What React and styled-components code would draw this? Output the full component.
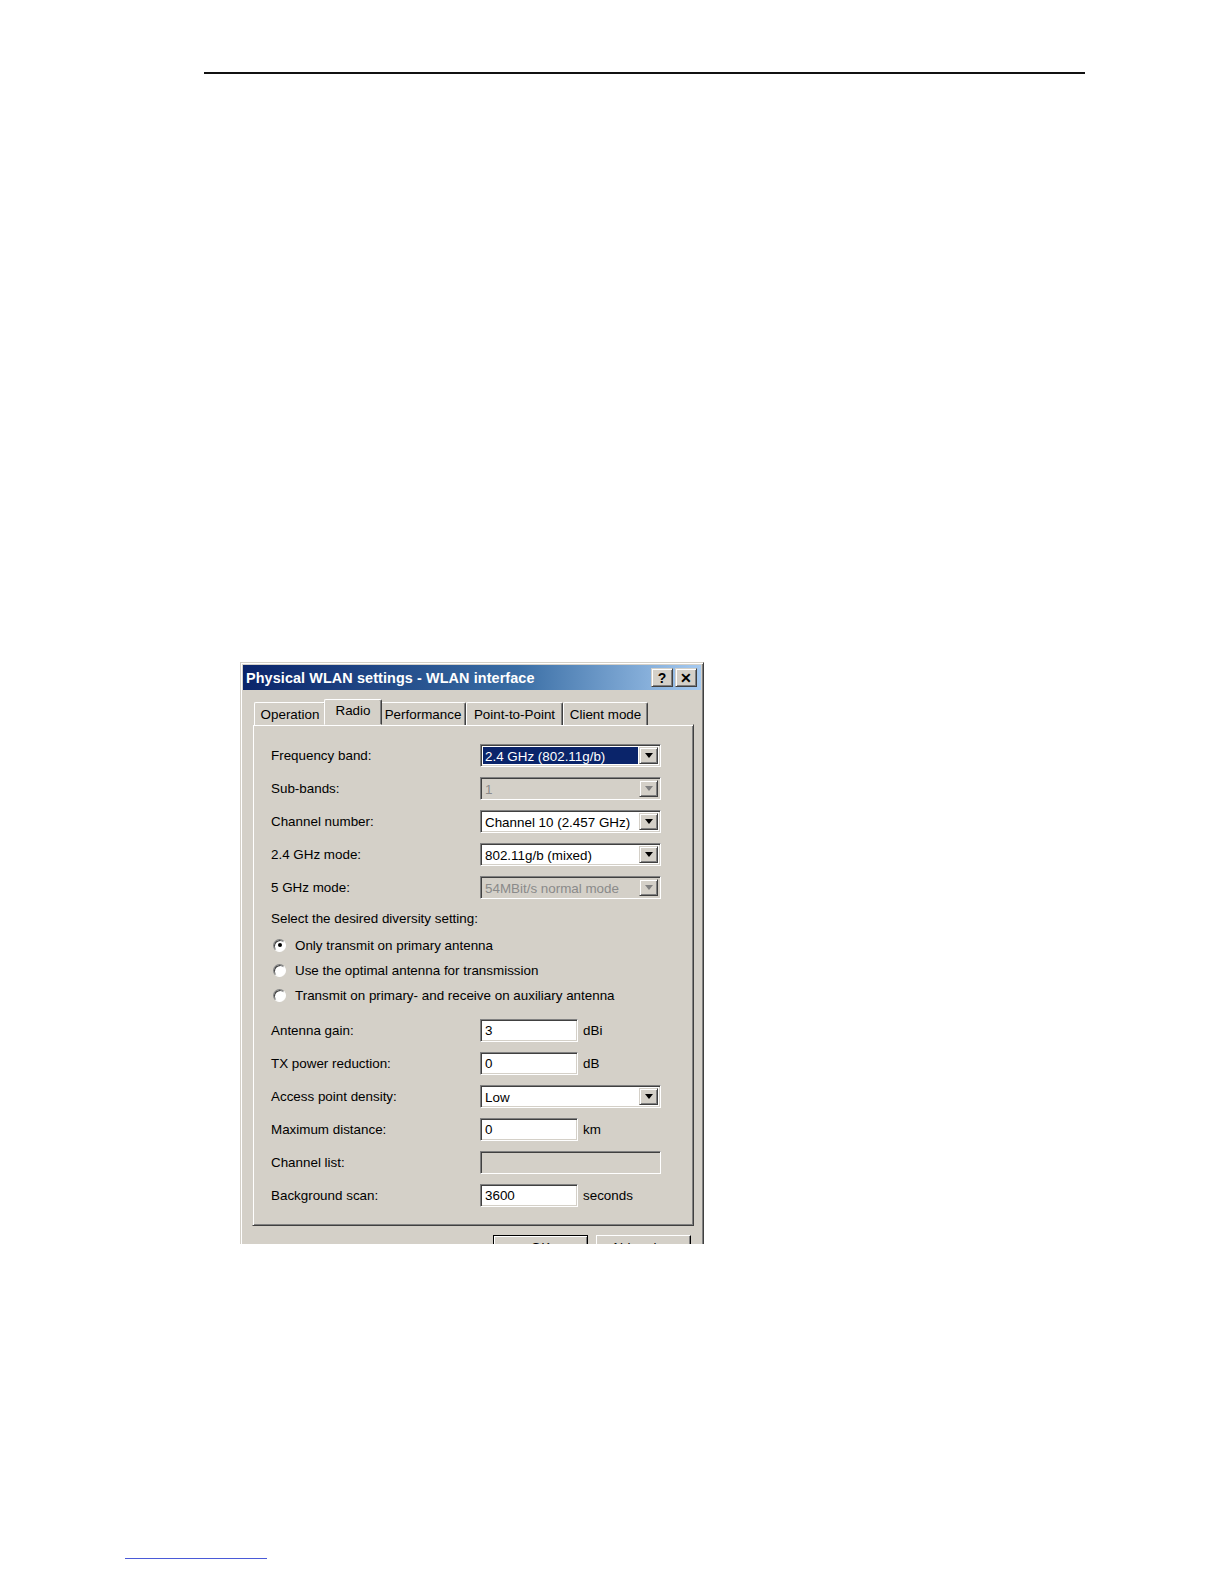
import React from "react";
import styled, { createGlobalStyle, css } from "styled-components";

const GlobalStyle = createGlobalStyle`
  html, body {
    margin: 0;
    padding: 0;
    background: #ffffff;
  }
  body {
    font-family: "Liberation Sans", Arial, sans-serif;
  }
`;

const ui = {
  face: "#d4d0c8",
  light: "#ffffff",
  shadow: "#808080",
  dark: "#404040",
  select: "#0a246a",
  disabledText: "#8a8a8a",
  text: "13.4px",
};

const raised = css`
  border: 1px solid;
  border-color: ${ui.face} ${ui.dark} ${ui.dark} ${ui.face};
  box-shadow: inset 1px 1px ${ui.light}, inset -1px -1px ${ui.shadow};
`;

const sunken = css`
  border: 1px solid;
  border-color: ${ui.shadow} ${ui.light} ${ui.light} ${ui.shadow};
  box-shadow: inset 1px 1px ${ui.dark}, inset -1px -1px ${ui.face};
`;

const Page = styled.div`
  width: 1224px;
  height: 1584px;
  display: flex;
  flex-direction: column;
  overflow: hidden;
`;

const HeaderRule = styled.div`
  margin: 72px 0 0 204px;
  width: 881px;
  height: 2px;
  background: #111;
`;

const DialogClip = styled.div`
  margin: 588px 0 0 240px;
  width: 464px;
  height: 582px;
  overflow: hidden;
`;

const Window = styled.div`
  ${raised};
  background: ${ui.face};
  width: 464px;
  height: 640px;
  box-sizing: border-box;
  padding: 2px;
  display: flex;
  flex-direction: column;
`;

const TitleBar = styled.div`
  height: 25px;
  background: linear-gradient(to right, #0a246a 0%, #3a6ea5 60%, #a6caf0 100%);
  display: flex;
  align-items: center;
  justify-content: space-between;
  padding: 0 4px 0 3px;
`;

const Title = styled.span`
  color: #ffffff;
  font-weight: bold;
  font-size: 14.4px;
  letter-spacing: 0.1px;
`;

const TitleButtons = styled.div`
  display: flex;
  gap: 2px;
`;

const TitleButton = styled.div`
  ${raised};
  background: ${ui.face};
  width: 20px;
  height: 17px;
  display: flex;
  align-items: center;
  justify-content: center;
  font-weight: bold;
  font-size: 14px;
  color: #000;
`;

const Body = styled.div`
  padding: 9px 10px 0 9px;
  display: flex;
  flex-direction: column;
`;

const TabStrip = styled.div`
  display: flex;
  align-items: flex-end;
  height: 26px;
  padding-left: 2px;
  position: relative;
  z-index: 1;
  margin-bottom: -1px;
`;

const Tab = styled.div`
  box-sizing: border-box;
  height: ${(p) => (p.active ? "26px" : "23px")};
  margin: ${(p) => (p.active ? "0 -2px" : "0")};
  padding: ${(p) => (p.active ? "1px 0 0" : "2px 0 0")};
  width: ${(p) => p.w}px;
  background: ${ui.face};
  border-top: 1px solid ${ui.light};
  border-left: 1px solid ${ui.light};
  border-right: 1px solid ${ui.dark};
  box-shadow: inset -1px 0 ${ui.shadow};
  border-radius: 2px 2px 0 0;
  font-size: ${ui.text};
  color: #000;
  text-align: center;
  line-height: 19px;
  white-space: nowrap;
  position: relative;
  z-index: ${(p) => (p.active ? 2 : 1)};
  border-bottom: ${(p) => (p.active ? `1px solid ${ui.face}` : "none")};
`;

const Panel = styled.div`
  ${raised};
  box-sizing: border-box;
  width: 442px;
  height: 502px;
  padding: 19px 0 0 18px;
  display: flex;
  flex-direction: column;
`;

const Row = styled.div`
  display: flex;
  align-items: center;
  height: 22px;
  margin-top: ${(p) => p.gap ?? 11}px;
`;

const Label = styled.div`
  width: 209px;
  font-size: ${ui.text};
  color: #000;
`;

const Combo = styled.div`
  ${sunken};
  box-sizing: border-box;
  width: 181px;
  height: 23px;
  padding: 2px;
  background: ${(p) => (p.disabled ? ui.face : "#ffffff")};
  display: flex;
  align-items: stretch;
`;

const ComboText = styled.div`
  flex: 1;
  font-size: ${ui.text};
  line-height: 19px;
  padding-left: 2px;
  margin-right: 1px;
  color: ${(p) => (p.disabled ? ui.disabledText : p.selected ? "#fff" : "#000")};
  background: ${(p) => (p.selected ? ui.select : "transparent")};
  white-space: nowrap;
  overflow: hidden;
`;

const DropButton = styled.div`
  ${raised};
  background: ${ui.face};
  width: 19px;
  box-sizing: border-box;
  display: flex;
  align-items: center;
  justify-content: center;
`;

const Arrow = styled.div`
  width: 0;
  height: 0;
  margin-top: 1px;
  border-left: 4px solid transparent;
  border-right: 4px solid transparent;
  border-top: 5px solid ${(p) => (p.disabled ? ui.shadow : "#000")};
`;

const Field = styled.div`
  ${sunken};
  box-sizing: border-box;
  width: ${(p) => p.w || 98}px;
  height: 23px;
  padding: 0 4px;
  background: ${(p) => (p.disabled ? ui.face : "#ffffff")};
  font-size: ${ui.text};
  line-height: 21px;
  color: #000;
`;

const Unit = styled.div`
  margin-left: 5px;
  font-size: ${ui.text};
  color: #000;
`;

const Caption = styled.div`
  font-size: ${ui.text};
  height: 18px;
  line-height: 18px;
  margin-top: ${(p) => p.gap}px;
  color: #000;
`;

const RadioRow = styled.div`
  display: flex;
  align-items: center;
  height: 18px;
  margin-top: ${(p) => p.gap}px;
  font-size: ${ui.text};
  color: #000;
  gap: 9px;
  margin-left: 2px;
`;

const RadioDot = styled.div`
  width: 13px;
  height: 13px;
  border-radius: 50%;
  box-sizing: border-box;
  background: #fff;
  border: 1px solid;
  border-color: ${ui.shadow} ${ui.light} ${ui.light} ${ui.shadow};
  box-shadow: inset 1px 1px ${ui.dark};
  display: flex;
  align-items: center;
  justify-content: center;
  &::after {
    content: "";
    width: 4px;
    height: 4px;
    border-radius: 50%;
    background: ${(p) => (p.checked ? "#000" : "transparent")};
  }
`;

const ButtonBar = styled.div`
  display: flex;
  justify-content: flex-end;
  gap: 8px;
  margin-top: 9px;
`;

const PushButton = styled.div`
  box-sizing: border-box;
  width: 95px;
  height: 30px;
  background: ${ui.face};
  border: 1px solid;
  border-color: ${(p) => (p.def ? "#000" : ui.light)} #000 #000 ${(p) => (p.def ? "#000" : ui.light)};
  box-shadow: ${(p) =>
    p.def
      ? `inset 1px 1px ${ui.light}, inset -1px -1px ${ui.shadow}`
      : `inset -1px -1px ${ui.shadow}`};
  font-size: ${ui.text};
  display: flex;
  align-items: flex-start;
  padding-top: 4px;
  justify-content: center;
`;

const FootRule = styled.div`
  margin: 314px 0 0 125px;
  width: 142px;
  height: 1px;
  background: #4a5ad8;
`;

const tabs = [
  { name: "Operation", w: 72 },
  { name: "Radio", w: 58, active: true },
  { name: "Performance", w: 86 },
  { name: "Point-to-Point", w: 97 },
  { name: "Client mode", w: 85 },
];

function ComboBox({ value, disabled, selected }) {
  return (
    <Combo disabled={disabled}>
      <ComboText disabled={disabled} selected={selected}>
        {value}
      </ComboText>
      <DropButton>
        <Arrow disabled={disabled} />
      </DropButton>
    </Combo>
  );
}

export default function App() {
  return (
    <Page>
      <GlobalStyle />
      <HeaderRule />
      <DialogClip>
        <Window>
          <TitleBar>
            <Title>Physical WLAN settings - WLAN interface</Title>
            <TitleButtons>
              <TitleButton>?</TitleButton>
              <TitleButton>✕</TitleButton>
            </TitleButtons>
          </TitleBar>
          <Body>
            <TabStrip>
              {tabs.map((t) => (
                <Tab key={t.name} active={t.active} w={t.w}>
                  {t.name}
                </Tab>
              ))}
            </TabStrip>
            <Panel>
              <Row gap={0}>
                <Label>Frequency band:</Label>
                <ComboBox value="2.4 GHz (802.11g/b)" selected />
              </Row>
              <Row>
                <Label>Sub-bands:</Label>
                <ComboBox value="1" disabled />
              </Row>
              <Row>
                <Label>Channel number:</Label>
                <ComboBox value="Channel 10 (2.457 GHz)" />
              </Row>
              <Row>
                <Label>2.4 GHz mode:</Label>
                <ComboBox value="802.11g/b (mixed)" />
              </Row>
              <Row>
                <Label>5 GHz mode:</Label>
                <ComboBox value="54MBit/s normal mode" disabled />
              </Row>
              <Caption gap={12}>Select the desired diversity setting:</Caption>
              <RadioRow gap={8}>
                <RadioDot checked />
                Only transmit on primary antenna
              </RadioRow>
              <RadioRow gap={7}>
                <RadioDot />
                Use the optimal antenna for transmission
              </RadioRow>
              <RadioRow gap={7}>
                <RadioDot />
                Transmit on primary- and receive on auxiliary antenna
              </RadioRow>
              <Row gap={15}>
                <Label>Antenna gain:</Label>
                <Field>3</Field>
                <Unit>dBi</Unit>
              </Row>
              <Row>
                <Label>TX power reduction:</Label>
                <Field>0</Field>
                <Unit>dB</Unit>
              </Row>
              <Row>
                <Label>Access point density:</Label>
                <ComboBox value="Low" />
              </Row>
              <Row>
                <Label>Maximum distance:</Label>
                <Field>0</Field>
                <Unit>km</Unit>
              </Row>
              <Row>
                <Label>Channel list:</Label>
                <Field w={181} disabled />
              </Row>
              <Row>
                <Label>Background scan:</Label>
                <Field>3600</Field>
                <Unit>seconds</Unit>
              </Row>
            </Panel>
            <ButtonBar>
              <PushButton def>OK</PushButton>
              <PushButton>Abbrechen</PushButton>
            </ButtonBar>
          </Body>
        </Window>
      </DialogClip>
      <FootRule />
    </Page>
  );
}
